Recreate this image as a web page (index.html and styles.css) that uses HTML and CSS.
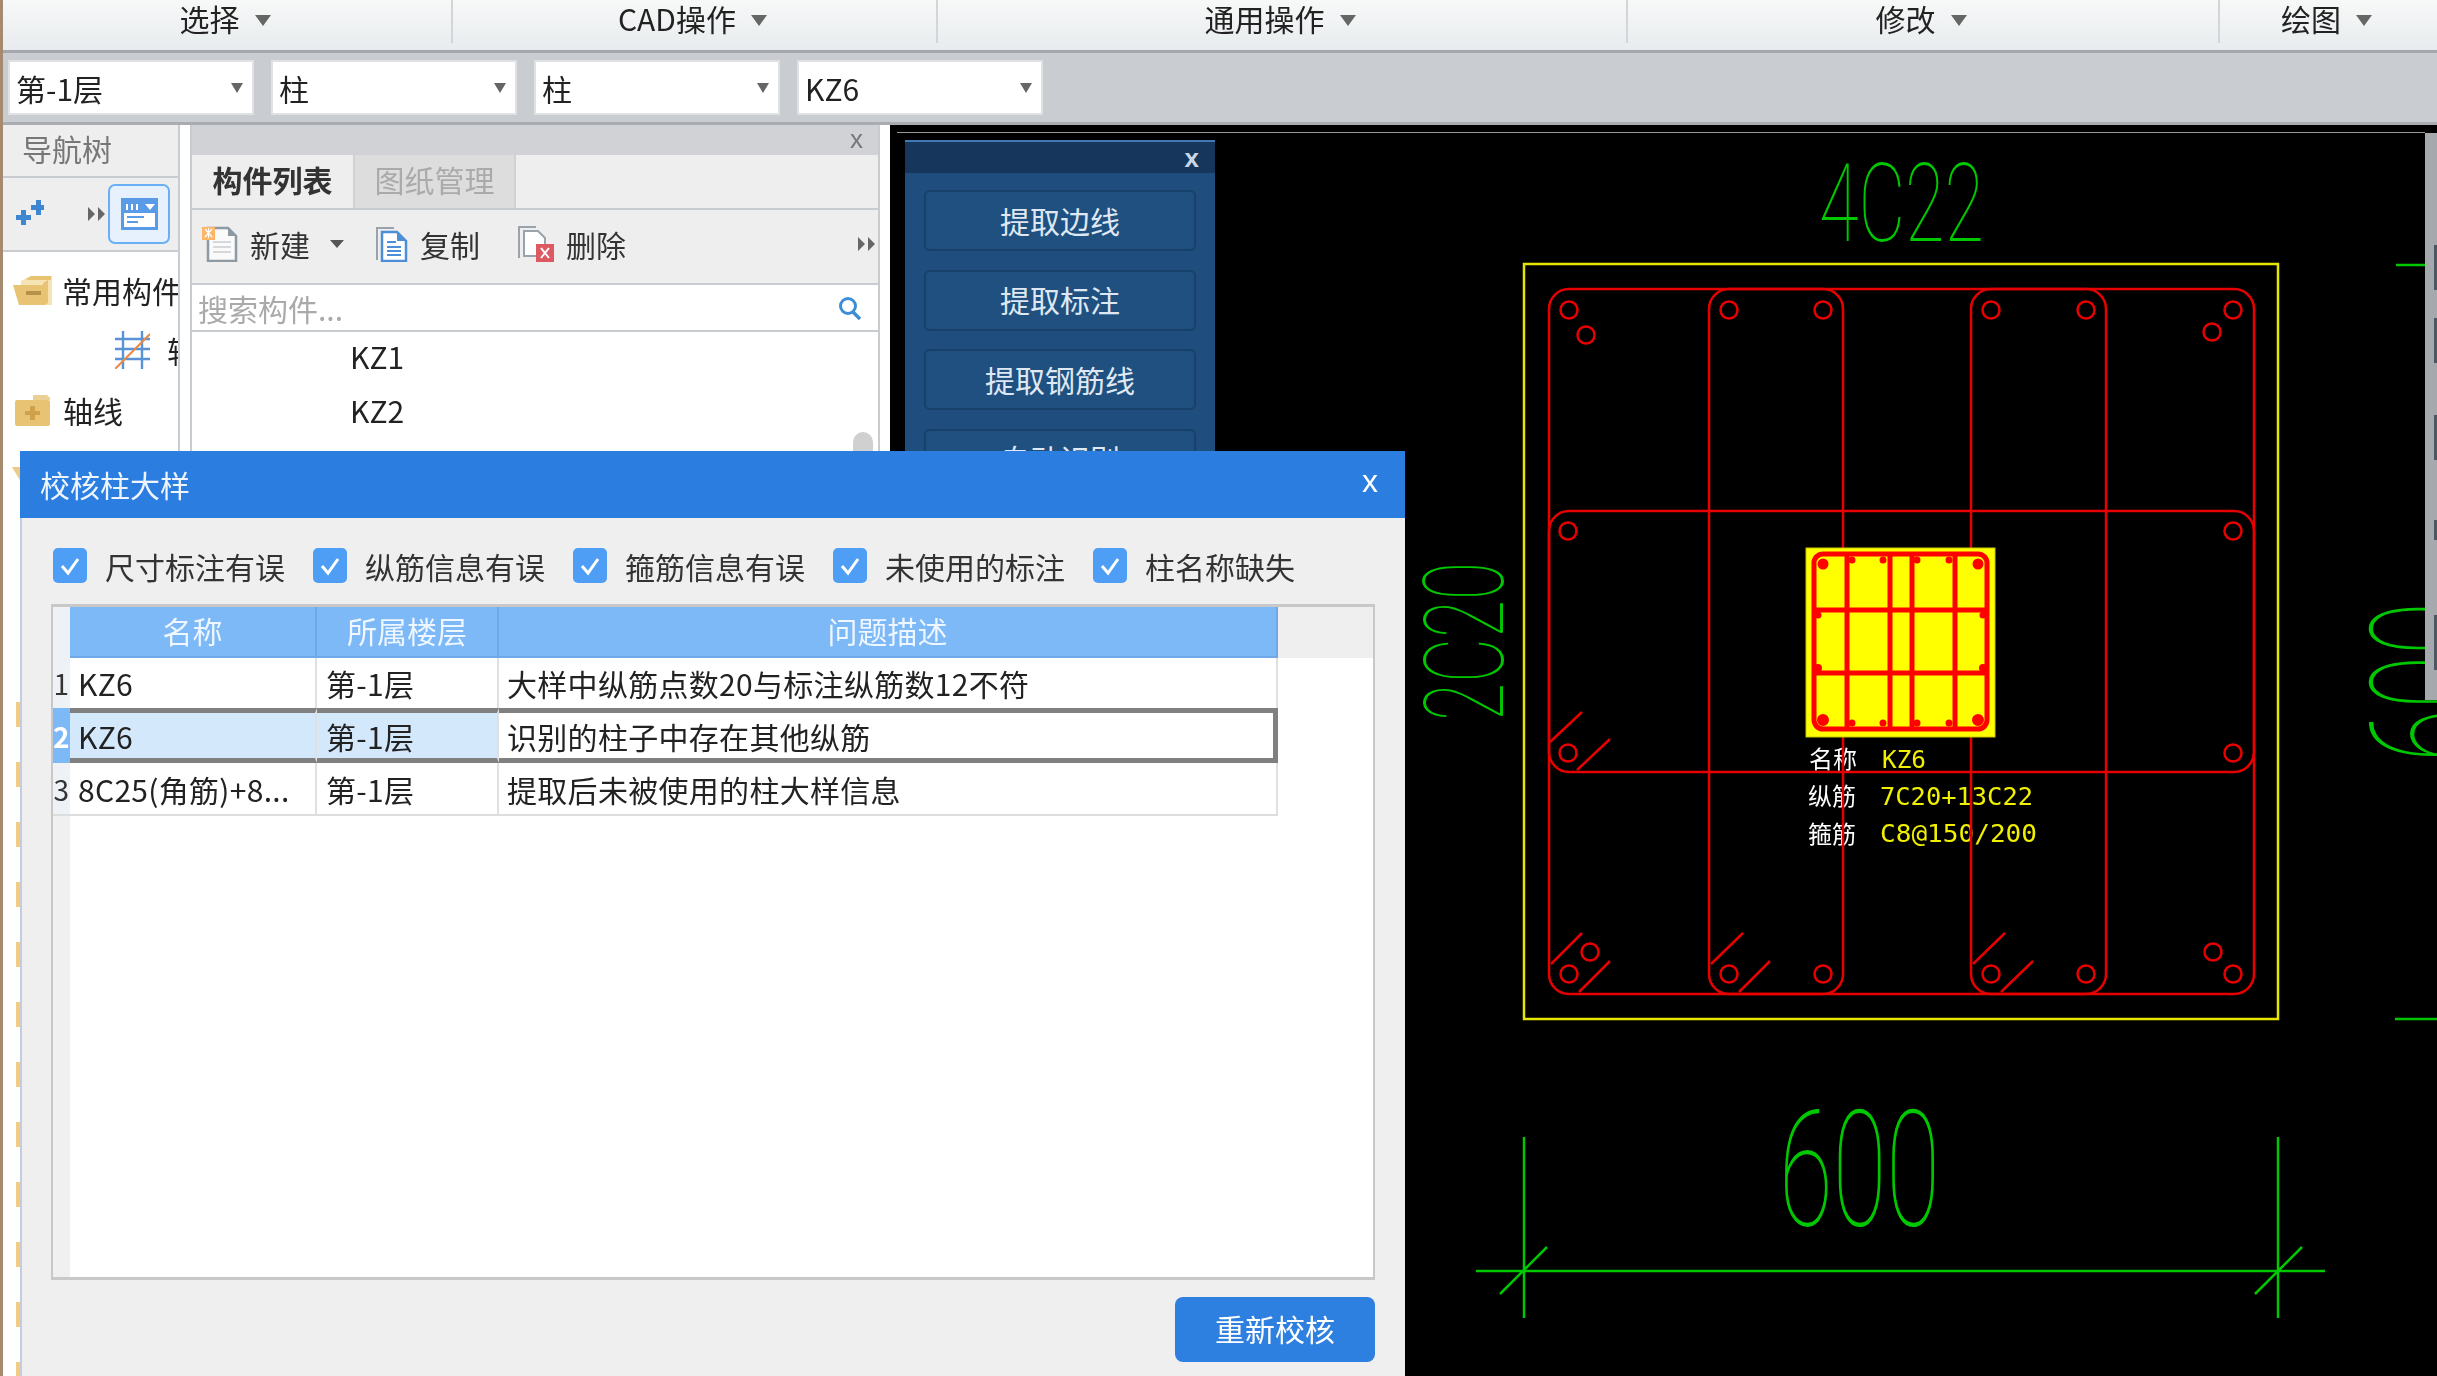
FILE: index.html
```html
<!DOCTYPE html>
<html lang="zh-CN">
<head>
<meta charset="utf-8">
<title>校核柱大样</title>
<link rel="stylesheet" href="styles.css">
</head>
<body>
<div class="app">
  <div class="menubar">
    <div class="menu-item w1">选择<i class="caret caret-lg"></i></div>
    <div class="menu-item w2">CAD操作<i class="caret caret-lg"></i></div>
    <div class="menu-item w3">通用操作<i class="caret caret-lg"></i></div>
    <div class="menu-item w4">修改<i class="caret caret-lg"></i></div>
    <div class="menu-item w5">绘图<i class="caret caret-lg"></i></div>
  </div>
  <div class="toolbar">
    <div class="combo"><span>第-1层</span><i class="caret"></i></div>
    <div class="combo"><span>柱</span><i class="caret"></i></div>
    <div class="combo"><span>柱</span><i class="caret"></i></div>
    <div class="combo"><span>KZ6</span><i class="caret"></i></div>
  </div>
  <div class="main">
    <aside class="nav">
      <div class="nav-head">导航树</div>
      <div class="nav-tools">
        <svg class="ico-plus" viewBox="0 0 32 28"><path d="M4 18h5v-5h5v5h5v5h-5v5H9v-5H4zM19 8h5V3h5v5h4v5h-4v5h-5v-5h-5z" fill="#3f86d2"/></svg>
        <svg class="ico-more" viewBox="0 0 17 14"><path d="M0 0l7 7-7 7zM10 0l7 7-7 7z" fill="#666"/></svg>
        <div class="nav-active">
          <svg viewBox="0 0 37 32" class="ico-panel"><rect width="37" height="32" fill="#5a9be8"/><rect x="3" y="15" width="31" height="14" fill="#fff"/><path d="M5 6h2v6H5zM10 6h2v6h-2zM15 6h2v6h-2z" fill="#fff"/><path d="M24 6h10l-5 6z" fill="#fff"/><path d="M6 18h17v2H6zM6 23h11v2H6z" fill="#5a9be8"/></svg>
        </div>
      </div>
      <div class="tree">
        <div class="tree-row">
          <svg class="ico-open" viewBox="0 0 39 30"><path d="M8 6l10-5h21v29H8z" fill="#f6e3b4"/><path d="M13 4l5-3h20v4H15z" fill="#e8c374"/><path d="M0 10h30v-2l5-3v23l-3 2H6z" fill="#e8c374"/><path d="M13 16h15v4H13z" fill="#b4924a"/></svg>
          <span class="tree-label">常用构件</span>
        </div>
        <div class="tree-row child">
          <svg class="ico-axis" viewBox="0 0 35 38"><path d="M8 0v38M27 0v38M0 8h35M0 18h35M0 28h35" stroke="#5a92d6" stroke-width="2.4" fill="none"/><path d="M35 3L0 38" stroke="#ea8a44" stroke-width="2" fill="none"/></svg>
          <span class="tree-label">轴线</span>
        </div>
        <div class="tree-row">
          <svg class="ico-closed" viewBox="0 0 35 31"><path d="M18 0h14l3 3v2H18z" fill="#ecd093"/><rect y="5" width="35" height="26" rx="2" fill="#e8c374"/><path d="M15 11h5v5h5v4h-5v5h-5v-5h-5v-4h5z" fill="#cfa14b"/></svg>
          <span class="tree-label">轴线</span>
        </div>
        <div class="tree-corner"></div>
        <div class="tree-dashes"></div>
      </div>
    </aside>
    <section class="side">
      <div class="side-head"><span class="side-x">x</span></div>
      <div class="tabs">
        <div class="tab tab-on">构件列表</div>
        <div class="tab tab-off">图纸管理</div>
      </div>
      <div class="side-tools">
        <div class="tool">
          <svg class="ico-new" viewBox="0 0 36 36"><path d="M6 2h20l8 8v25H6z" fill="#fafafa" stroke="#8d99a3" stroke-width="2.5"/><path d="M26 2v8h8z" fill="#8d99a3"/><path d="M11 16h18M11 21h18M11 26h18" stroke="#d4d8dc" stroke-width="2"/><path d="M0 1h13v13H0z" fill="#fbb66a"/><path d="M3 3l7 8M10 3l-7 8M6.500 2v10" stroke="#fff" stroke-width="1.200"/></svg>
          <span>新建</span><i class="caret caret-tool"></i>
        </div>
        <div class="tool">
          <svg class="ico-copy" viewBox="0 0 32 35"><path d="M1 33V1h17" fill="none" stroke="#9aa3ab" stroke-width="2"/><path d="M6 5h15l9 9v20H6z" fill="#fff" stroke="#4c8ed8" stroke-width="2.500"/><path d="M21 5v9h9z" fill="#4c8ed8"/><path d="M11 15h9M11 20h14M11 24h14M11 28h14" stroke="#4c8ed8" stroke-width="2"/></svg>
          <span>复制</span>
        </div>
        <div class="tool">
          <svg class="ico-del" viewBox="0 0 42 36"><path d="M7 32V1h17" fill="none" stroke="#9aa3ab" stroke-width="2"/><path d="M12 5h14l7 7v18H12z" fill="#fff" stroke="#9aa3ab" stroke-width="2"/><rect x="24" y="18" width="18" height="18" fill="#de5a63"/><path d="M29 22l8 10M37 22l-8 10" stroke="#fff" stroke-width="2" fill="none"/></svg>
          <span>删除</span>
        </div>
        <svg class="ico-more side-more" viewBox="0 0 17 14"><path d="M0 0l7 7-7 7zM10 0l7 7-7 7z" fill="#666"/></svg>
      </div>
      <div class="search">
        <span class="search-text">搜索构件...</span>
        <svg class="ico-search" viewBox="0 0 24 24"><circle cx="10" cy="10" r="7.500" fill="none" stroke="#3e8ed6" stroke-width="3"/><path d="M15 16l7 7" stroke="#3e8ed6" stroke-width="3.500"/></svg>
      </div>
      <div class="list">
        <div class="list-row">KZ1</div>
        <div class="list-row">KZ2</div>
        <div class="thumb"></div>
      </div>
    </section>
    <section class="canvas">
      <svg class="cad" viewBox="890 125 1547 1251">
        <g class="labels">
          <text class="lbl-w" x="1809" y="768">名称</text>
          <text class="lbl-y" x="1882" y="768" textLength="44" lengthAdjust="spacingAndGlyphs">KZ6</text>
          <text class="lbl-w" x="1808" y="805">纵筋</text>
          <text class="lbl-y" x="1880" y="805" textLength="153" lengthAdjust="spacingAndGlyphs">7C20+13C22</text>
          <text class="lbl-w" x="1808" y="843">箍筋</text>
          <text class="lbl-y" x="1880" y="842" textLength="157" lengthAdjust="spacingAndGlyphs">C8@150/200</text>
        </g>
        <rect class="yl" x="1524" y="264" width="754" height="755"/>
        <g class="red">
          <rect x="1549" y="289" width="705" height="705" rx="20"/>
          <rect x="1709" y="289" width="134" height="705" rx="20"/>
          <rect x="1971" y="289" width="135" height="705" rx="20"/>
          <rect x="1549" y="511" width="705" height="261" rx="20"/>
          <circle cx="1569" cy="310" r="8.500"/><circle cx="1586" cy="335" r="8.500"/><circle cx="1729" cy="310" r="8.500"/><circle cx="1823" cy="310" r="8.500"/><circle cx="1991" cy="310" r="8.500"/><circle cx="2086" cy="310" r="8.500"/><circle cx="2233" cy="310" r="8.500"/><circle cx="2212" cy="332" r="8.500"/>
          <circle cx="1568" cy="531" r="8.500"/><circle cx="2233" cy="531" r="8.500"/><circle cx="1568" cy="753" r="8.500"/><circle cx="2233" cy="753" r="8.500"/>
          <circle cx="1569" cy="974" r="8.500"/><circle cx="1590" cy="952" r="8.500"/><circle cx="1729" cy="974" r="8.500"/><circle cx="1823" cy="974" r="8.500"/><circle cx="1991" cy="974" r="8.500"/><circle cx="2086" cy="974" r="8.500"/><circle cx="2213" cy="952" r="8.500"/><circle cx="2233" cy="974" r="8.500"/>
          <path d="M1551 964L1582 933M1579 992L1610 961M1711 964L1743 933M1739 992L1770 961M1973 964L2005 933M2001 992L2033 961M1550 742L1582 712M1577 770L1610 739"/>
        </g>
        <rect class="mini-bg" x="1806" y="548" width="189" height="189"/>
        <g class="mini">
          <rect x="1814" y="554" width="173" height="175" rx="9"/>
          <path d="M1847 554V729M1890 554V729M1912 554V729M1955 554V729M1814 610H1987M1814 673H1987"/>
          <circle class="blob" cx="1823" cy="564" r="4"/><circle cx="1852" cy="560" r="2"/><circle cx="1883" cy="560" r="2"/><circle cx="1917" cy="560" r="2"/><circle cx="1949" cy="560" r="2"/><circle class="blob" cx="1978" cy="564" r="4"/>
          <circle cx="1818" cy="615" r="2"/><circle cx="1983" cy="615" r="2"/><circle cx="1818" cy="668" r="2.500"/><circle cx="1983" cy="668" r="2.500"/>
          <circle class="blob" cx="1823" cy="720" r="4.500"/><circle cx="1852" cy="723" r="2"/><circle cx="1883" cy="723" r="2"/><circle cx="1917" cy="723" r="2"/><circle cx="1949" cy="723" r="2"/><circle class="blob" cx="1978" cy="720" r="4.500"/>
        </g>
        <g class="dim">
          <path d="M1476 1271H2325M1524 1137V1318M2278 1137V1318M1500 1294L1547 1247M2255 1294L2302 1247M2396 265H2437M2395 1019H2437"/>
        </g>
        <text class="dim-text t110" x="1819" y="241" textLength="165" lengthAdjust="spacingAndGlyphs">4C22</text>
        <text class="dim-text t162" x="1779" y="1225" textLength="161" lengthAdjust="spacingAndGlyphs">600</text>
        <text class="dim-text t112" x="1503" y="721" textLength="159" lengthAdjust="spacingAndGlyphs" transform="rotate(-90 1503 721)">2C20</text>
        <text class="dim-text t162" x="2485" y="762" textLength="160" lengthAdjust="spacingAndGlyphs" transform="rotate(-90 2485 762)">600</text>
      </svg>
      <div class="canvas-line"></div>
      <div class="scroll-strip"><i class="m1"></i><i class="m2"></i><i class="m3"></i><i class="m4"></i><i class="m5"></i></div>
      <div class="float">
        <div class="float-head"><span>x</span></div>
        <div class="float-body">
          <div class="float-btn">提取边线</div>
          <div class="float-btn">提取标注</div>
          <div class="float-btn">提取钢筋线</div>
          <div class="float-btn">自动识别</div>
        </div>
      </div>
    </section>
  </div>
</div>

<div class="dialog">
  <div class="dlg-title"><span>校核柱大样</span><span class="dlg-x">x</span></div>
  <div class="dlg-body">
    <div class="checks">
      <label class="check"><svg class="cb" viewBox="0 0 34 35"><path d="M9 18l6 7 10-14" fill="none" stroke="#fff" stroke-width="3"/></svg>尺寸标注有误</label>
      <label class="check"><svg class="cb" viewBox="0 0 34 35"><path d="M9 18l6 7 10-14" fill="none" stroke="#fff" stroke-width="3"/></svg>纵筋信息有误</label>
      <label class="check"><svg class="cb" viewBox="0 0 34 35"><path d="M9 18l6 7 10-14" fill="none" stroke="#fff" stroke-width="3"/></svg>箍筋信息有误</label>
      <label class="check"><svg class="cb" viewBox="0 0 34 35"><path d="M9 18l6 7 10-14" fill="none" stroke="#fff" stroke-width="3"/></svg>未使用的标注</label>
      <label class="check"><svg class="cb" viewBox="0 0 34 35"><path d="M9 18l6 7 10-14" fill="none" stroke="#fff" stroke-width="3"/></svg>柱名称缺失</label>
    </div>
    <div class="grid">
      <div class="row row-head">
        <div class="c-idx"></div>
        <div class="c-name">名称</div>
        <div class="c-floor">所属楼层</div>
        <div class="c-desc">问题描述</div>
      </div>
      <div class="row row-a">
        <div class="c-idx">1</div>
        <div class="c-name">KZ6</div>
        <div class="c-floor">第-1层</div>
        <div class="c-desc">大样中纵筋点数20与标注纵筋数12不符</div>
      </div>
      <div class="row row-sel">
        <div class="c-idx">2</div>
        <div class="c-name">KZ6</div>
        <div class="c-floor">第-1层</div>
        <div class="c-desc">识别的柱子中存在其他纵筋</div>
      </div>
      <div class="row row-c">
        <div class="c-idx">3</div>
        <div class="c-name">8C25(角筋)+8...</div>
        <div class="c-floor">第-1层</div>
        <div class="c-desc">提取后未被使用的柱大样信息</div>
      </div>
      <div class="grid-fill"></div>
    </div>
    <div class="dlg-foot"><button class="primary">重新校核</button></div>
  </div>
</div>
</body>
</html>
```
FILE: styles.css
```css
* { box-sizing: border-box; }
html, body { margin: 0; padding: 0; }
body {
  width: 2437px; height: 1376px; overflow: hidden; position: relative;
  font-family: "Noto Sans CJK SC", "Noto Sans", sans-serif;
  font-size: 30px; color: #222; background: #fff;
}
.app { display: flex; flex-direction: column; height: 1376px; border-left: 3px solid #a58a70; filter: blur(0.5px); }

.caret { display: inline-block; width: 0; height: 0; border-left: 6px solid transparent; border-right: 6px solid transparent; border-top: 10px solid #555; }
.caret-lg { border-left-width: 8px; border-right-width: 8px; border-top-width: 11px; margin-left: 15px; margin-top: 5px; border-top-color: #666; }
.caret-tool { border-left-width: 7px; border-right-width: 7px; border-top-width: 8px; margin-left: 8px; }

.menubar { display: flex; height: 53px; flex: none; padding-bottom: 7px; background: linear-gradient(#f7f8f8, #e8ecee); border-bottom: 3px solid #a3a6aa; }
.menu-item { display: flex; align-items: center; justify-content: center; height: 43px; padding: 0 4px 7px 0; border-right: 2px solid #d3d6d8; line-height: 38px; }
.w1 { width: 450px; } .w2 { width: 485px; } .w3 { width: 690px; } .w4 { width: 592px; }
.w5 { flex: 1; border-right: 0; }

.toolbar { display: flex; align-items: center; gap: 17px; height: 72px; flex: none; padding: 0 0 1px 5px; background: #c9ccd1; border-bottom: 3px solid #a9acb0; }
.combo { display: flex; align-items: center; justify-content: space-between; width: 246px; height: 55px; padding: 2px 9px 0 6px; background: #fff; border: 2px solid #dfe1e3; }
.combo .caret { border-top-color: #666; }

.main { display: flex; flex: 1; min-height: 0; background: #fff; }

.nav { width: 177px; flex: none; border-right: 2px solid #c8cbcf; display: flex; flex-direction: column; }
.nav-head { height: 53px; padding-left: 19px; line-height: 47px; color: #777; background: #eee; border-bottom: 2px solid #c8cbcf; }
.nav-tools { display: flex; align-items: center; height: 74px; background: #eee; border-bottom: 2px solid #c8cbcf; }
.ico-plus { width: 32px; height: 28px; margin-left: 9px; margin-top: -6px; }
.ico-more { width: 17px; height: 14px; margin-left: 44px; }
.nav-active { display: flex; align-items: center; justify-content: center; width: 62px; height: 60px; margin-left: 3px; border: 2px solid #6aaef5; border-radius: 7px; background: #e6f1fd; }
.ico-panel { width: 37px; height: 32px; }
.tree { position: relative; flex: 1; padding-top: 8px; overflow: hidden; }
.tree-row { display: flex; align-items: center; height: 60px; padding-left: 10px; white-space: nowrap; }
.tree-label { margin-left: 10px; }
.tree-row.child { padding-left: 112px; }
.tree-row.child .tree-label { margin-left: 17px; }
.ico-open { width: 39px; height: 30px; flex: none; }
.ico-closed { width: 35px; height: 31px; flex: none; margin: 0 3px 0 2px; }
.ico-axis { width: 35px; height: 38px; flex: none; }
.tree-corner { position: absolute; left: 9px; top: 215px; width: 12px; height: 20px; background: #ecca84; clip-path: polygon(0 0, 100% 0, 100% 100%); }
.tree-dashes { position: absolute; left: 13px; top: 450px; width: 4px; bottom: 0; background: repeating-linear-gradient(#f3cb85 0 25px, #fff 25px 60px); }

.side { position: relative; width: 690px; margin-left: 10px; flex: none; display: flex; flex-direction: column; border-left: 2px solid #c8cbcf; border-right: 2px solid #c8cbcf; }
.side-head { display: flex; align-items: center; justify-content: flex-end; height: 30px; padding: 0 15px 3px 0; background: #d0d2d6; }
.side-x { color: #777; font-family: "Liberation Sans", sans-serif; font-size: 26px; line-height: 1; }
.tabs { display: flex; height: 55px; background: #eee; border-bottom: 2px solid #c8cbcf; }
.tab { display: flex; align-items: center; justify-content: center; height: 53px; padding-bottom: 5px; }
.tab-on { width: 161px; font-weight: 700; color: #333; }
.tab-off { width: 163px; background: #ddd; color: #aaa; border-left: 2px solid #cfd1d4; border-right: 2px solid #cfd1d4; }
.side-tools { display: flex; align-items: center; gap: 32px; height: 75px; padding: 0 0 5px 10px; background: #eee; border-bottom: 2px solid #c8cbcf; color: #333; }
.tool { display: flex; align-items: center; gap: 12px; }
.ico-new { width: 36px; height: 36px; }
.ico-copy { width: 32px; height: 35px; }
.ico-del { width: 42px; height: 36px; }
.side-more { margin-left: auto; margin-right: 3px; }
.search { display: flex; align-items: center; justify-content: space-between; height: 47px; padding: 0 16px 0 6px; border-bottom: 2px solid #c8cbcf; }
.search-text { color: #aaa; }
.ico-search { width: 24px; height: 24px; }
.list { position: relative; flex: 1; }
.list-row { display: flex; align-items: center; height: 54px; padding: 0 0 6px 158px; }
.thumb { position: absolute; top: 100px; right: 5px; width: 20px; height: 60px; background: #d0d0d0; border-radius: 10px; }

.canvas { position: relative; flex: 1; background: #000; overflow: hidden; margin-left: 10px; }
.cad { position: absolute; left: 0; top: 0; width: 1547px; height: 1251px; }
.canvas-line { position: absolute; left: 7px; right: 12px; top: 7px; height: 1px; background: #9a9a9a; }
.yl { fill: none; stroke: #e6e600; stroke-width: 2.500; }
.red { fill: none; stroke: #e80000; stroke-width: 2.500; }
.mini-bg { fill: #ffff00; stroke: #c8c800; stroke-width: 1; }
.mini { fill: none; stroke: #f00; stroke-width: 5; }
.mini circle { stroke-width: 3; fill: #f00; }
.dim { fill: none; stroke: #00c800; stroke-width: 2.500; }
.dim-text { fill: #00c800; font-family: Roboto, sans-serif; font-weight: 100; }
.t110 { font-size: 110px; }
.t112 { font-size: 112px; }
.t162 { font-size: 162px; }
.lbl-w { fill: #fff; font-size: 24px; }
.lbl-y { fill: #f0f000; font-size: 24px; font-family: "DejaVu Sans Mono", monospace; }

.scroll-strip { position: absolute; right: 0; top: 8px; width: 12px; height: 567px; background: #a5a8ac; }
.scroll-strip i { position: absolute; right: 0; width: 3px; background: #4c5560; }
.m1 { top: 112px; height: 45px; } .m2 { top: 185px; height: 45px; } .m3 { top: 282px; height: 45px; } .m4 { top: 387px; height: 20px; } .m5 { top: 482px; height: 55px; }

.float { position: absolute; left: 15px; top: 15px; width: 310px; height: 400px; background: #1f4d7e; border-top: 2px solid #3f7ab5; }
.float-head { display: flex; align-items: center; justify-content: flex-end; height: 31px; padding-right: 16px; background: #16365c; color: #c9d6e6; font-family: "Liberation Sans", sans-serif; font-size: 26px; font-weight: 700; line-height: 1; }
.float-body { display: flex; flex-direction: column; gap: 18.5px; padding: 17px 19px; }
.float-btn { display: flex; align-items: center; justify-content: center; height: 61px; flex: none; padding-bottom: 2px; background: #1f5080; border: 2px solid #17406b; border-radius: 6px; color: #dfe8f2; }

.dialog { position: absolute; left: 20px; top: 451px; width: 1385px; height: 925px; background: #efefef; display: flex; flex-direction: column; filter: blur(0.5px); }
.dlg-title { display: flex; align-items: center; justify-content: space-between; height: 67px; flex: none; padding: 0 27px 2px 20px; background: #2b7de0; color: #eef5fd; }
.dlg-x { font-family: "Liberation Sans", sans-serif; color: #fff; font-size: 32px; line-height: 1; padding-bottom: 5px; }
.dlg-body { display: flex; flex-direction: column; flex: 1; padding: 30px 29px 0 29px; border-left: 2px solid #c3cde0; }
.checks { display: flex; height: 35px; flex: none; padding-left: 2px; color: #333; }
.check { display: flex; align-items: center; gap: 18px; width: 260px; flex: none; }
.cb { width: 34px; height: 35px; background: #4f9ef5; border-radius: 5px; flex: none; }

.grid { display: flex; flex-direction: column; width: 1324px; height: 676px; margin-top: 21px; flex: none; background: #fff; border: 2px solid #c8c8c8; border-top-width: 3px; border-bottom-width: 3px; }
.row { display: grid; grid-template-columns: 17px 247px 182px 779px; flex: none; }
.row > div { display: flex; align-items: center; border-right: 2px solid #e0e0e0; white-space: nowrap; overflow: hidden; letter-spacing: 0.3px; }
.row-head { height: 51px; background: #efefef; }
.row-head > div { justify-content: center; padding: 0 0 3px; background: #7db8f7; color: #eef6ff; border-right-color: #6ea8e8; border-bottom: 2px solid #6ea8e8; letter-spacing: 0; }
.row-head .c-idx { background: #eef1f6; border-right: 0; border-bottom: 0; }
.row-a { height: 50px; }
.row-c { height: 53px; width: 1225px; border-bottom: 2px solid #ddd; }
.row-sel { height: 55px; }
.c-idx { justify-content: center; background: #eef1f6; color: #333; border-right: 0 !important; font-size: 28px; }
.c-name { padding-left: 8px; }
.c-floor { padding-left: 9px; }
.c-desc { padding-left: 8px; }
.row-sel > div { background: #d4e8fc; border-top: 5px solid #808080; border-bottom: 5px solid #808080; }
.row-sel .c-idx { background: #7db8f7; color: #fff; border-top: 0; border-bottom: 0; font-weight: 700; }
.row-sel .c-desc { background: #fff; border-right: 5px solid #808080; }
.grid-fill { flex: 1; border-left: 17px solid #f0f0f0; }

.dlg-foot { display: flex; justify-content: flex-end; margin-top: 17px; width: 1324px; }
.primary { width: 200px; height: 65px; padding: 0 0 3px; background: #2e80e0; color: #fff; border: 0; border-radius: 8px; font: inherit; font-size: 30px; }
```
